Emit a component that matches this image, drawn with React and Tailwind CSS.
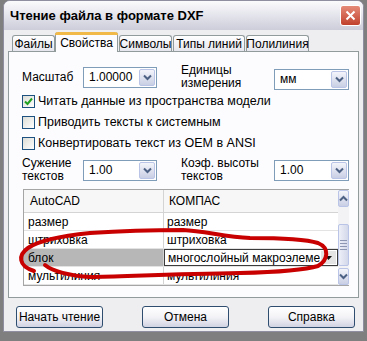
import React from 'react';

const font = "font-['Liberation_Sans',Arial,sans-serif]";

const Chevron = ({ up = false }) => (
  <svg width="9" height="7" viewBox="0 0 9 7">
    <path
      d={up ? 'M1 5.5 L4.5 2 L8 5.5' : 'M1 1.5 L4.5 5 L8 1.5'}
      fill="none"
      stroke="#4d6185"
      strokeWidth="2"
    />
  </svg>
);

const DropBtn = ({ up = false, className = '' }) => (
  <div
    className={`flex items-center justify-center rounded-[2px] border border-[#b9c4e6] bg-gradient-to-b from-[#f4f5fb] to-[#c9cfe4] ${className}`}
  >
    <Chevron up={up} />
  </div>
);

const Select = ({ value, className = '' }) => (
  <div className={`flex h-[21px] items-stretch border border-[#7f9db9] bg-white ${className}`}>
    <span className="flex-1 pl-[5px] text-[12px] leading-[19px] text-black">{value}</span>
    <DropBtn className="m-[1px] w-[16px]" />
  </div>
);

const Check = ({ checked, label }) => (
  <div className="flex h-[21px] items-center">
    <div className="flex h-[13px] w-[13px] items-center justify-center border border-[#1c5180] bg-gradient-to-br from-[#dcdcd7] to-white">
      {checked && (
        <svg width="9" height="9" viewBox="0 0 9 9">
          <path d="M1 4.5 L3.5 7 L8 1.5" fill="none" stroke="#21a121" strokeWidth="2" />
        </svg>
      )}
    </div>
    <span className="ml-[3px] text-[12.5px] text-black">{label}</span>
  </div>
);

const Tab = ({ label, active, className = '' }) =>
  active ? (
    <div
      className={`relative z-10 -mb-[1px] flex h-[20px] items-center justify-center rounded-t-[3px] border-x border-[#919b9c] bg-[#fcfcfe] ${className}`}
    >
      <div className="absolute left-[-1px] right-[-1px] top-0 h-[3px] rounded-t-[3px] bg-[#f1b948]" />
      <span className="pt-[2px] text-[12px] text-black">{label}</span>
    </div>
  ) : (
    <div
      className={`flex h-[16px] items-center justify-center rounded-t-[3px] border border-b-0 border-[#919b9c] bg-gradient-to-b from-white to-[#e6e6ee] ${className}`}
    >
      <span className="pt-[1px] text-[12px] text-black">{label}</span>
    </div>
  );

const Button = ({ label }) => (
  <div className="flex h-[22px] w-[87px] items-center justify-center rounded-[3px] border border-[#2f4d6e] bg-gradient-to-b from-white via-[#f3f3f7] to-[#d2d3e3] text-[12px] text-black">
    {label}
  </div>
);

const rows = [
  ['размер', 'размер'],
  ['штриховка', 'штриховка'],
  ['блок', 'многослойный макроэлеме'],
  ['мультилиния', 'мультилиния'],
];

export default function App() {
  return (
    <div className={`relative h-[341px] w-[367px] overflow-hidden bg-[#7f7f7f] pl-[3px] ${font}`}>
      {/* Window */}
      <div className="flex h-[332px] w-[361px] flex-col rounded-t-[7px] border border-[#8e8ea0] bg-[#eeeef1]">
        {/* Title bar */}
        <div className="flex h-[29px] items-center justify-between rounded-t-[6px] bg-gradient-to-b from-[#fbfbfd] via-[#e4e4ec] to-[#cdcdda] pl-[6px] pr-[2px]">
          <span className="text-[13px] font-bold text-black">Чтение файла в формате DXF</span>
          <div className="flex h-[21px] w-[21px] items-center justify-center rounded-[3px] border border-white bg-gradient-to-b from-[#e58a78] to-[#c0402c]">
            <svg width="11" height="11" viewBox="0 0 11 11">
              <path d="M1.5 1.5 L9.5 9.5 M9.5 1.5 L1.5 9.5" stroke="white" strokeWidth="2" />
            </svg>
          </div>
        </div>

        {/* Tabs */}
        <div className="mt-[2px] flex items-end pl-[8px]">
          <Tab label="Файлы" className="w-[43px]" />
          <Tab label="Свойства" active className="w-[63px]" />
          <Tab label="Символы" className="ml-[1px] w-[53px]" />
          <Tab label="Типы линий" className="ml-[1px] w-[72px]" />
          <Tab label="Полилиния" className="ml-[1px] w-[63px]" />
        </div>

        {/* Panel */}
        <div className="ml-[4px] flex h-[247px] w-[351px] flex-col border border-[#919b9c] bg-[#fcfcfe] pl-[13px]">
          <div className="mt-[12px] flex h-[26px] items-center">
            <span className="w-[61px] text-[12px] text-black">Масштаб</span>
            <Select value="1.00000" className="w-[74px]" />
            <span className="ml-[24px] w-[93px] text-[12px] leading-[13px] text-black">
              Единицы
              <br />
              измерения
            </span>
            <Select value="мм" className="mt-[4px] w-[75px]" />
          </div>

          <div className="mt-[1px] flex flex-col">
            <Check checked label="Читать данные из пространства модели" />
            <Check label="Приводить тексты к системным" />
            <Check label="Конвертировать текст из OEM в ANSI" />
          </div>

          <div className="mt-[3px] flex h-[26px] items-center">
            <span className="w-[61px] self-start text-[12px] leading-[13px] text-black">
              Сужение
              <br />
              текстов
            </span>
            <Select value="1.00" className="w-[74px]" />
            <span className="ml-[24px] w-[93px] self-start text-[12px] leading-[13px] text-black">
              Коэф. высоты
              <br />
              текстов
            </span>
            <Select value="1.00" className="w-[75px]" />
          </div>

          {/* Table */}
          <div className="ml-[1px] mt-[6px] flex h-[97px] w-[326px] border border-[#a5a5a5] bg-white">
            <div className="flex flex-1 flex-col">
              <div className="flex h-[23px] border-b border-[#d4d4d4] bg-[#f7f7f7] text-[12px] text-black">
                <span className="flex w-[140px] items-center border-r border-[#d4d4d4] pl-[6px]">AutoCAD</span>
                <span className="flex flex-1 items-center pl-[5px]">КОМПАС</span>
              </div>
              {rows.map(([a, b], i) => (
                <div key={a} className="flex h-[18px] border-b border-[#e3e3e3] text-[12px] text-black">
                  <span
                    className={`flex w-[140px] items-center border-r border-[#d4d4d4] pl-[4px] ${
                      i === 2 ? 'bg-[#b7b7b7]' : ''
                    }`}
                  >
                    {a}
                  </span>
                  {i === 2 ? (
                    <div className="flex flex-1 items-stretch overflow-hidden border border-[#3c3c3c] bg-white">
                      <span className="flex-1 overflow-hidden whitespace-nowrap pl-[3px] leading-[16px]">{b}</span>
                      <div className="m-[1px] flex w-[15px] items-center justify-center bg-[#e4e4e4]">
                        <svg width="7" height="4" viewBox="0 0 7 4">
                          <path d="M0 0 L7 0 L3.5 4 Z" fill="#111" />
                        </svg>
                      </div>
                    </div>
                  ) : (
                    <span className="flex flex-1 items-center pl-[3px]">{b}</span>
                  )}
                </div>
              ))}
            </div>
            {/* Scrollbar */}
            <div className="flex w-[17px] flex-col bg-[#f3f3f6]">
              <DropBtn up className="h-[17px]" />
              <div className="mt-[17px] flex h-[42px] flex-col items-center justify-center gap-[2px] rounded-[2px] border border-[#b9c4e6] bg-gradient-to-r from-[#eef0f8] to-[#d3d8ea]">
                <div className="h-[1px] w-[7px] bg-[#8d97b4]" />
                <div className="h-[1px] w-[7px] bg-[#8d97b4]" />
                <div className="h-[1px] w-[7px] bg-[#8d97b4]" />
                <div className="h-[1px] w-[7px] bg-[#8d97b4]" />
              </div>
              <div className="flex-1" />
              <DropBtn className="h-[17px]" />
            </div>
          </div>
        </div>

        {/* Buttons */}
        <div className="mt-[8px] flex justify-between pl-[12px] pr-[8px]">
          <Button label="Начать чтение" />
          <Button label="Отмена" />
          <Button label="Справка" />
        </div>
      </div>

      {/* Red hand-drawn ellipse */}
      <svg className="pointer-events-none absolute left-0 top-0" width="367" height="341" viewBox="0 0 367 341">
        <path
          d="M45 265 C52 271, 70 276, 90 277 C130 276, 180 274, 240 273 C280 272, 305 270, 318 266 C328 260, 330 248, 318 243 C305 239, 280 238, 250 238 C225 237, 205 231, 183 230 C150 230, 120 231, 90 233 C60 236, 38 241, 28 248 C18 255, 18 266, 34 271"
          fill="none"
          stroke="#c80000"
          strokeWidth="4"
          strokeLinecap="round"
        />
      </svg>
    </div>
  );
}
